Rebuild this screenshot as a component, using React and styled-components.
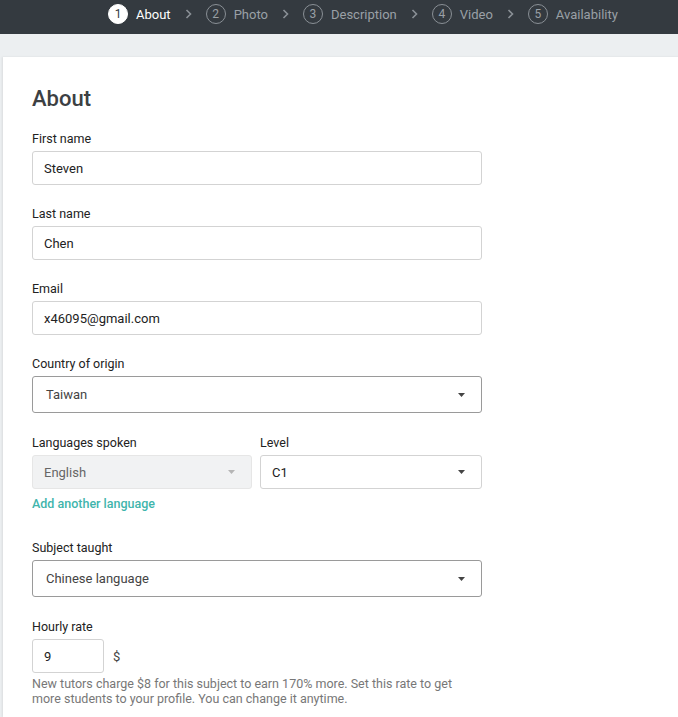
import React from 'react'
import styled, { createGlobalStyle } from 'styled-components'

const Global = createGlobalStyle`
  html, body { margin: 0; padding: 0; }
  body {
    background: #eceff1;
    font-family: Roboto, "Noto Sans", Arial, sans-serif;
    overflow: hidden;
  }
`

const steps = ['About', 'Photo', 'Description', 'Video', 'Availability']

function Caret({ light }) {
  return (
    <svg width="7" height="4" viewBox="0 0 7 4">
      <path d="M0 0 L7 0 L3.5 4 Z" fill={light ? '#b5b5b5' : '#444'} />
    </svg>
  )
}

function Chevron() {
  return (
    <svg width="7" height="10" viewBox="0 0 7 10">
      <path d="M1.5 1 L5.5 5 L1.5 9" fill="none" stroke="#8a9096" strokeWidth="1.6" />
    </svg>
  )
}

export default function App() {
  return (
    <>
      <Global />
      <TopBar>
        {steps.map((s, i) => (
          <Step key={s}>
            <Circle active={i === 0}>{i + 1}</Circle>
            <StepName active={i === 0}>{s}</StepName>
            {i < steps.length - 1 && <ChevronWrap><Chevron /></ChevronWrap>}
          </Step>
        ))}
      </TopBar>
      <Page>
        <Card>
          <Title>About</Title>

          <Field>
            <Label>First name</Label>
            <TextInput>Steven</TextInput>
          </Field>
          <Field>
            <Label>Last name</Label>
            <TextInput>Chen</TextInput>
          </Field>
          <Field>
            <Label>Email</Label>
            <TextInput>x46095@gmail.com</TextInput>
          </Field>
          <Field gap={22}>
            <Label>Country of origin</Label>
            <Select>
              <span>Taiwan</span>
              <Caret />
            </Select>
          </Field>

          <LangRow>
            <Field gap={0}>
              <Label>Languages spoken</Label>
              <SmallSelect disabled>
                <span>English</span>
                <Caret light />
              </SmallSelect>
            </Field>
            <Field gap={0}>
              <Label>Level</Label>
              <SmallSelect>
                <span>C1</span>
                <Caret />
              </SmallSelect>
            </Field>
          </LangRow>
          <AddLink>Add another language</AddLink>

          <Field gap={22}>
            <Label>Subject taught</Label>
            <Select>
              <span>Chinese language</span>
              <Caret />
            </Select>
          </Field>

          <Field gap={0}>
            <Label>Hourly rate</Label>
            <RateRow>
              <RateInput>9</RateInput>
              <Currency>$</Currency>
            </RateRow>
          </Field>
          <Help>
            New tutors charge $8 for this subject to earn 170% more. Set this rate to get
            more students to your profile. You can change it anytime.
          </Help>
        </Card>
      </Page>
    </>
  )
}

const TopBar = styled.div`
  height: 34px;
  background: #343a40;
  display: flex;
  align-items: center;
  padding: 0 0 6px 108px;
  box-sizing: border-box;
`

const Step = styled.div`
  display: flex;
  align-items: center;
`

const Circle = styled.div`
  width: 20px;
  height: 20px;
  box-sizing: border-box;
  border-radius: 50%;
  border: 1px solid ${p => (p.active ? '#fff' : '#8a9096')};
  background: ${p => (p.active ? '#fff' : 'transparent')};
  color: ${p => (p.active ? '#343a40' : '#9aa0a6')};
  font-size: 12px;
  display: flex;
  align-items: center;
  justify-content: center;
`

const StepName = styled.span`
  margin-left: 8px;
  font-size: 13px;
  color: ${p => (p.active ? '#ffffff' : '#9aa0a6')};
`

const ChevronWrap = styled.span`
  display: flex;
  margin: 0 14px;
`

const Page = styled.div`
  padding: 23px 0 0 3px;
  height: calc(100vh - 34px);
  box-sizing: border-box;
`

const Card = styled.div`
  background: #fff;
  min-height: 100%;
  box-shadow: -1px 0 2px rgba(0, 0, 0, 0.08);
  padding: 29px 0 0 29px;
  box-sizing: border-box;
  width: 700px;
`

const Title = styled.h1`
  margin: 0 0 19px;
  font-size: 22px;
  font-weight: 500;
  color: #3c4043;
  line-height: 26px;
`

const Field = styled.div`
  display: flex;
  flex-direction: column;
  margin-bottom: ${p => (p.gap !== undefined ? p.gap : 21)}px;
`

const Label = styled.label`
  font-size: 12.5px;
  font-weight: 400;
  color: #222;
  line-height: 16px;
  margin-bottom: 4px;
`

const TextInput = styled.div`
  width: 450px;
  height: 34px;
  box-sizing: border-box;
  border: 1px solid #d3d3d3;
  border-radius: 3px;
  padding: 0 11px;
  display: flex;
  align-items: center;
  font-size: 13px;
  color: #222;
`

const Select = styled.div`
  width: 450px;
  height: 37px;
  box-sizing: border-box;
  border: 1px solid #9a9a9a;
  border-radius: 3px;
  padding: 0 16px 0 13px;
  display: flex;
  align-items: center;
  justify-content: space-between;
  font-size: 13px;
  color: #444;
`

const LangRow = styled.div`
  display: grid;
  grid-template-columns: 220px 222px;
  column-gap: 8px;
`

const SmallSelect = styled.div`
  height: 34px;
  box-sizing: border-box;
  border: 1px solid ${p => (p.disabled ? '#e6e6e6' : '#d3d3d3')};
  background: ${p => (p.disabled ? '#f1f2f3' : '#fff')};
  border-radius: 3px;
  padding: 0 16px 0 11px;
  display: flex;
  align-items: center;
  justify-content: space-between;
  font-size: 13px;
  color: ${p => (p.disabled ? '#666' : '#222')};
`

const AddLink = styled.div`
  margin: 8px 0 29px;
  font-size: 12.5px;
  font-weight: 500;
  color: #3fb5ac;
  line-height: 14px;
`

const RateRow = styled.div`
  display: flex;
  align-items: center;
`

const RateInput = styled(TextInput)`
  width: 72px;
`

const Currency = styled.span`
  margin-left: 9px;
  font-size: 13px;
  color: #444;
`

const Help = styled.p`
  margin: 3px 0 0;
  width: 450px;
  font-size: 12.5px;
  line-height: 15px;
  color: #777;
`
